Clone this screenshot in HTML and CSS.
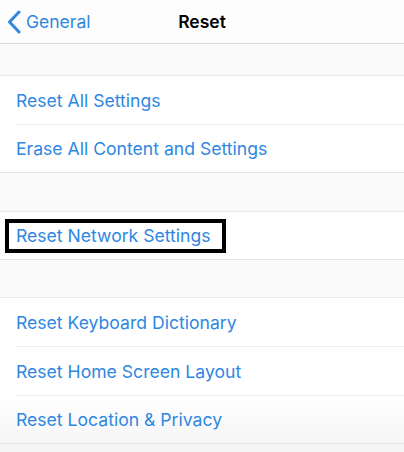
FILE: index.html
```html
<!DOCTYPE html>
<html lang="en">
<head>
    <meta charset="UTF-8">
    <meta name="viewport" content="width=device-width, initial-scale=1.0">
    <title>Reset</title>
    <link rel="stylesheet" href="styles.css">
</head>
<body>

    <div class="navbar">
        <a class="back" href="#">
            <svg class="chevron" width="14" height="24" viewBox="0 0 14 24">
                <path d="M12 2 L2.5 12 L12 22" fill="none" stroke="#2e87e2" stroke-width="3" stroke-linecap="round" stroke-linejoin="round"/>
            </svg>
            <span>General</span>
        </a>
        <h1>Reset</h1>
    </div>

    <div class="spacer first"></div>
    <div class="group">
        <div class="row">Reset All Settings</div>
        <div class="row">Erase All Content and Settings</div>
    </div>

    <div class="spacer"></div>
    <div class="group">
        <div class="row"><span class="highlight">Reset Network Settings</span></div>
    </div>

    <div class="spacer short"></div>
    <div class="group">
        <div class="row">Reset Keyboard Dictionary</div>
        <div class="row">Reset Home Screen Layout</div>
        <div class="row last">Reset Location &amp; Privacy</div>
    </div>

    <div class="footer"></div>

</body>
</html>
```

FILE: styles.css
```css
body {
    margin: 0;
    font-family: Inter, "Liberation Sans", Arial, sans-serif;
    background-color: #fafafa;
}
.navbar {
    position: relative;
    height: 43px;
    background-color: #fdfdfd;
    border-bottom: 1px solid #d9d9d9;
    display: flex;
    align-items: center;
    justify-content: center;
}
.navbar h1 {
    margin: 0;
    font-size: 17.5px;
    font-weight: 600;
    color: #000;
}
.back {
    position: absolute;
    left: 7px;
    top: 0;
    height: 43px;
    display: flex;
    align-items: center;
    gap: 5px;
    color: #2e87e2;
    text-decoration: none;
    font-size: 17.5px;
}
.spacer {
    height: 38px;
    border-bottom: 1px solid #ebebeb;
}
.spacer.first {
    height: 31px;
}
.spacer.short {
    height: 37px;
}
.spacer + .group {
    border-bottom: 1px solid #e4e4e4;
}
.group {
    background-color: #fff;
}
.row {
    height: 48px;
    margin-left: 16px;
    display: flex;
    align-items: center;
    font-size: 17.6px;
    color: #2e87e2;
    border-bottom: 1px solid #ececec;
}
.row:last-child {
    height: 47px;
    border-bottom: none;
}
.row.last {
    background: linear-gradient(#fff, #f6f6f6);
    margin-left: 0;
    padding-left: 16px;
}
.highlight {
    margin-left: -11px;
    padding: 2px 11px 3px 7px;
    border: 4px solid #000;
    background-color: #fff;
}
.footer {
    height: 20px;
    background-color: #f5f5f5;
}
```
